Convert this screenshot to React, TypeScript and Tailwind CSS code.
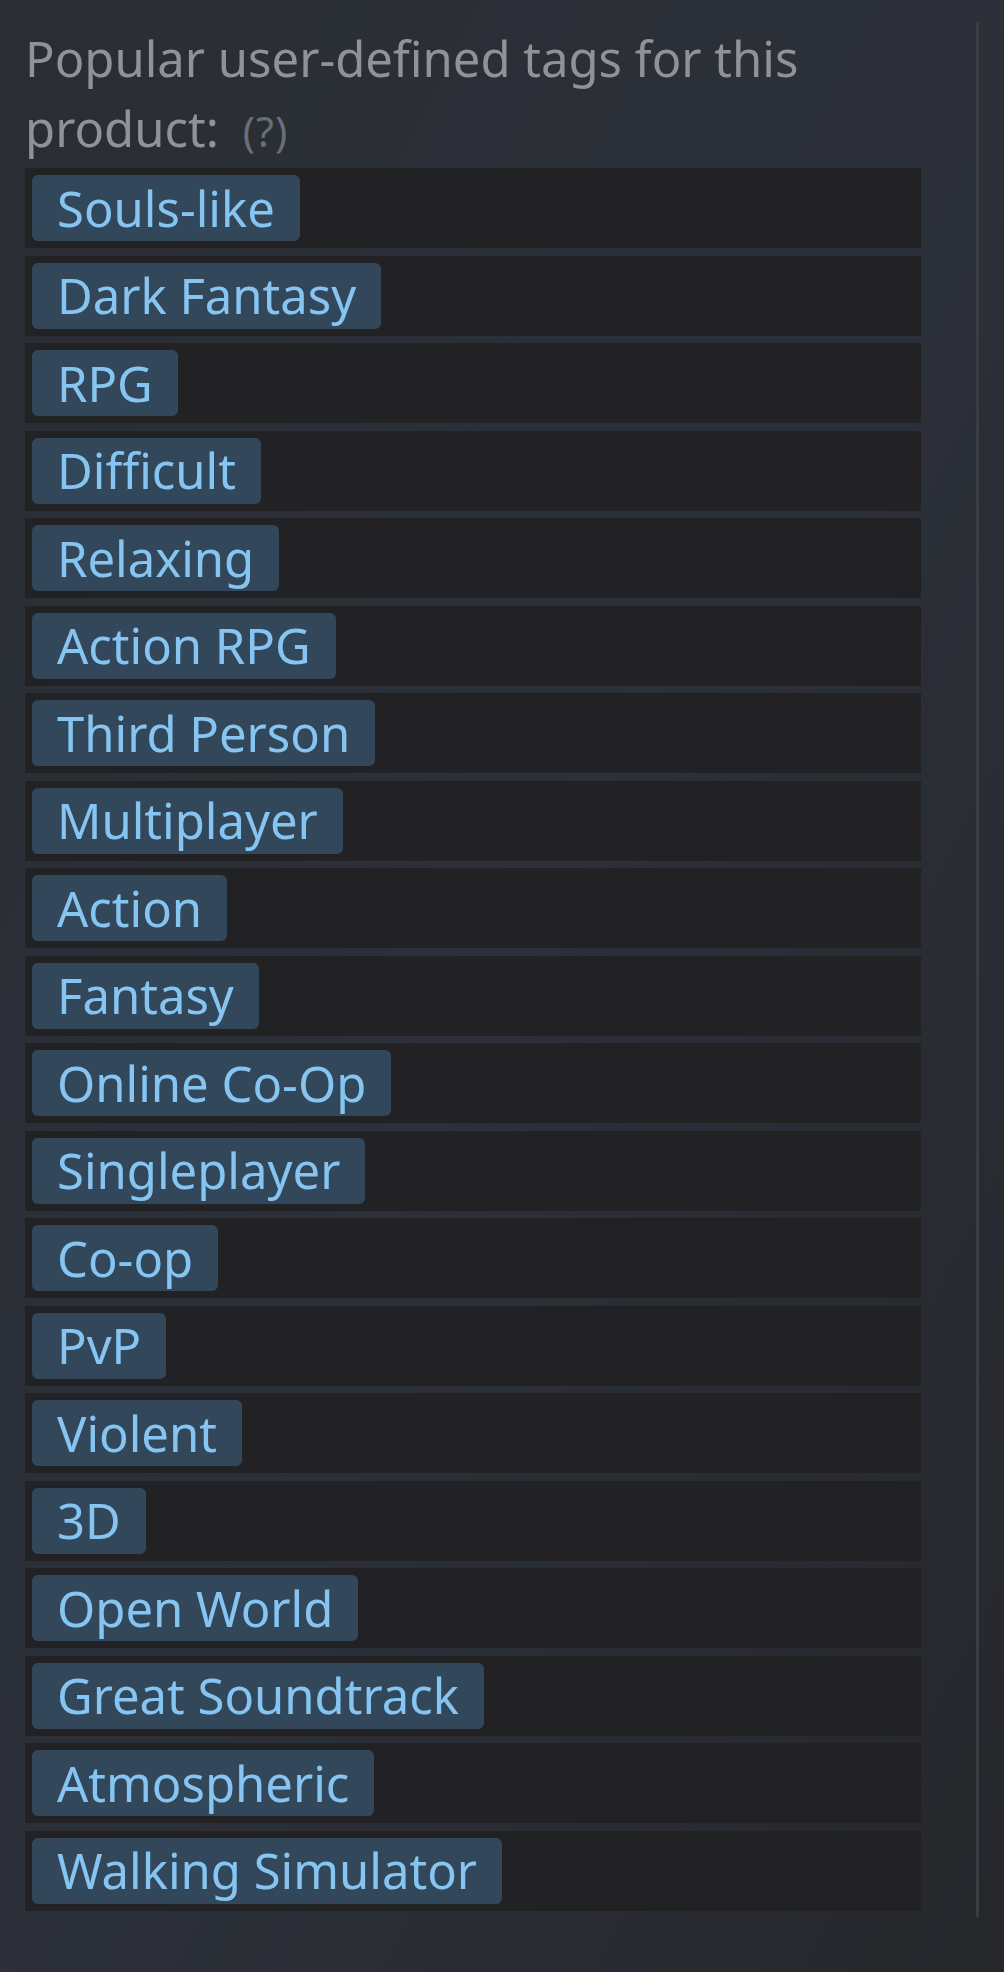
const tags = [
  "Souls-like",
  "Dark Fantasy",
  "RPG",
  "Difficult",
  "Relaxing",
  "Action RPG",
  "Third Person",
  "Multiplayer",
  "Action",
  "Fantasy",
  "Online Co-Op",
  "Singleplayer",
  "Co-op",
  "PvP",
  "Violent",
  "3D",
  "Open World",
  "Great Soundtrack",
  "Atmospheric",
  "Walking Simulator",
];

export default function App() {
  return (
    <div className="h-[1972px] w-[1004px] overflow-hidden bg-gradient-to-br from-[#2a2d33] via-[#2c3039] to-[#25272b] font-['Noto_Sans',sans-serif]">
      <div className="flex">
        <div className="ml-[25px] w-[896px] pt-[23px]">
          <h2 className="h-[140px] text-[49px] leading-[70px] font-normal text-[#8f9297]">
            Popular user-defined tags for this product:
            <span className="ml-[24px] text-[41px] leading-[41px] tracking-[1px] text-[#6a6e75]">(?)</span>
          </h2>
          <div className="mt-[5px] flex flex-col gap-[7.5px]">
            {tags.map((t) => (
              <div key={t} className="h-[80px] bg-[#222225] pl-[7px] pt-[7px]">
                <span className="inline-flex h-[66px] items-center rounded-[6px] bg-[#33475a] px-[25px] text-[49px] leading-none text-[#86c5f2]">
                  {t}
                </span>
              </div>
            ))}
          </div>
        </div>
        <div className="ml-[55px] mt-[22px] h-[1895px] w-[3px] bg-[#3a3d44]" />
      </div>
    </div>
  );
}
